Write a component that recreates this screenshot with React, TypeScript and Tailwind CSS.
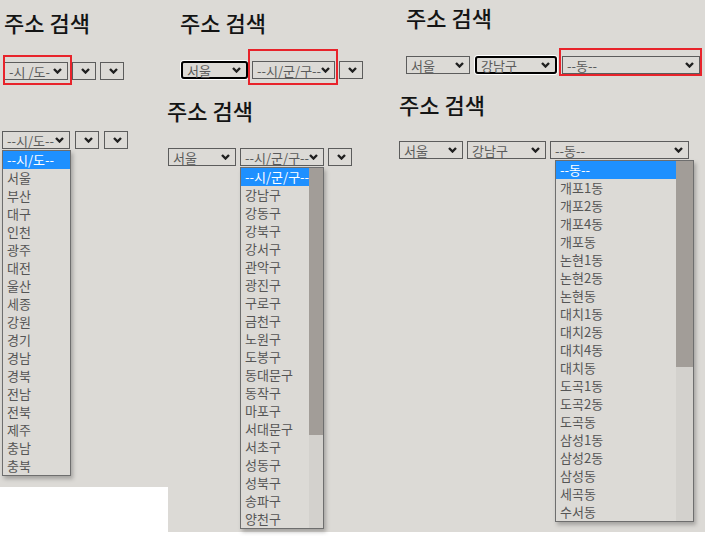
import React from 'react';

const FONT = "font-['Noto_Sans_CJK_KR','Noto_Sans',sans-serif]";

const sido = ['--시/도--', '서울', '부산', '대구', '인천', '광주', '대전', '울산', '세종', '강원', '경기', '경남', '경북', '전남', '전북', '제주', '충남', '충북'];
const gu = ['--시/군/구--', '강남구', '강동구', '강북구', '강서구', '관악구', '광진구', '구로구', '금천구', '노원구', '도봉구', '동대문구', '동작구', '마포구', '서대문구', '서초구', '성동구', '성북구', '송파구', '양천구'];
const dong = ['--동--', '개포1동', '개포2동', '개포4동', '개포동', '논현1동', '논현2동', '논현동', '대치1동', '대치2동', '대치4동', '대치동', '도곡1동', '도곡2동', '도곡동', '삼성1동', '삼성2동', '삼성동', '세곡동', '수서동'];

const Chevron = () => (
  <svg width="9" height="6" viewBox="0 0 9 6" className="shrink-0">
    <path d="M1 1 L4.5 4.5 L8 1" fill="none" stroke="#1f1f1f" strokeWidth="2.4" />
  </svg>
);

interface SelProps {
  label?: string;
  className: string;
  focused?: boolean;
}

// 닫힌 select 박스
const Sel: React.FC<SelProps> = ({ label = '', className, focused }) => (
  <div
    className={`flex h-[18px] items-center justify-between pl-[4px] pr-[5px] text-[13px] leading-none text-[#5a5a5a] ${
      focused ? 'rounded-[3px] border-2 border-black shadow-[0_0_0_1px_#ffffff]' : 'border border-[#5c5c5c]'
    } ${className}`}
  >
    <span className="whitespace-nowrap">{label}</span>
    <Chevron />
  </div>
);

interface ListProps {
  items: string[];
  className: string;
  scroll?: boolean;
  thumb?: string;
}

// 펼쳐진 옵션 목록
const OptionList: React.FC<ListProps> = ({ items, className, scroll, thumb }) => (
  <div className={`absolute flex border border-[#6e6e6e] bg-[#dcdad6] shadow-[2px_3px_4px_rgba(0,0,0,0.25)] ${className}`}>
    <div className="flex-1">
      {items.map((t, i) => (
        <div
          key={t}
          className={`h-[18px] pl-[4px] text-[13px] leading-[18px] whitespace-nowrap ${
            i === 0 ? 'bg-[#1e90ff] text-white' : 'text-[#555555]'
          }`}
        >
          {t}
        </div>
      ))}
    </div>
    {scroll && (
      <div className="flex w-[17px] flex-col bg-[#d3d1cd]">
        <div className={`bg-[#a29d98] ${thumb}`} />
      </div>
    )}
  </div>
);

const Heading: React.FC<{ className: string }> = ({ className }) => (
  <div className={`absolute text-[22px] font-medium leading-[26px] text-[#141414] whitespace-nowrap ${className}`}>주소 검색</div>
);

const Row: React.FC<{ className: string; children: React.ReactNode }> = ({ className, children }) => (
  <div className={`absolute flex items-center ${className}`}>{children}</div>
);

const RedBox: React.FC<{ className: string }> = ({ className }) => (
  <div className={`absolute border-2 border-[#e8232b] ${className}`} />
);

export default function App() {
  return (
    <div className={`relative h-[536px] w-[707px] overflow-hidden bg-white ${FONT}`}>
      <div className="flex items-start">
        <div className="h-[487px] w-[168px] bg-[#dcdad6]" />
        <div className="h-[532px] w-[537px] bg-[#dcdad6]" />
      </div>

      {/* 1: 시/도 */}
      <Heading className="left-[4px] top-[9px]" />
      <Row className="left-[4px] top-[62px] gap-[4px]">
        <Sel label="-시 /도-" className="w-[64px]" />
        <Sel className="w-[24px]" />
        <Sel className="w-[24px]" />
      </Row>
      <RedBox className="left-[3px] top-[55px] h-[30px] w-[69px]" />

      <Row className="left-[2px] top-[131px] gap-[5px]">
        <Sel label="--시/도--" className="w-[68px]" />
        <Sel className="w-[24px]" />
        <Sel className="w-[24px]" />
      </Row>
      <OptionList items={sido} className="left-[2px] top-[150px] w-[69px]" />

      {/* 2: 시/군/구 */}
      <Heading className="left-[180px] top-[9px]" />
      <Row className="left-[181px] top-[61px] gap-[4px]">
        <Sel label="서울" className="w-[67px]" focused />
        <Sel label="--시/군/구--" className="w-[83px]" />
        <Sel className="w-[24px]" />
      </Row>
      <RedBox className="left-[248px] top-[49px] h-[36px] w-[90px]" />

      <Heading className="left-[167px] top-[97px]" />
      <Row className="left-[168px] top-[148px] gap-[4px]">
        <Sel label="서울" className="w-[68px]" />
        <Sel label="--시/군/구--" className="w-[84px]" />
        <Sel className="w-[24px]" />
      </Row>
      <OptionList items={gu} className="left-[240px] top-[167px] w-[84px]" scroll thumb="h-[267px]" />

      {/* 3: 동 */}
      <Heading className="left-[406px] top-[4px]" />
      <Row className="left-[406px] top-[56px] gap-[5px]">
        <Sel label="서울" className="w-[64px]" />
        <Sel label="강남구" className="w-[82px]" focused />
        <Sel label="--동--" className="w-[138px]" />
      </Row>
      <RedBox className="left-[559px] top-[48px] h-[28px] w-[143px]" />

      <Heading className="left-[399px] top-[91px]" />
      <Row className="left-[399px] top-[141px] gap-[4px]">
        <Sel label="서울" className="w-[64px]" />
        <Sel label="강남구" className="w-[79px]" />
        <Sel label="--동--" className="w-[139px]" />
      </Row>
      <OptionList items={dong} className="left-[555px] top-[160px] w-[139px]" scroll thumb="h-[206px]" />
    </div>
  );
}
